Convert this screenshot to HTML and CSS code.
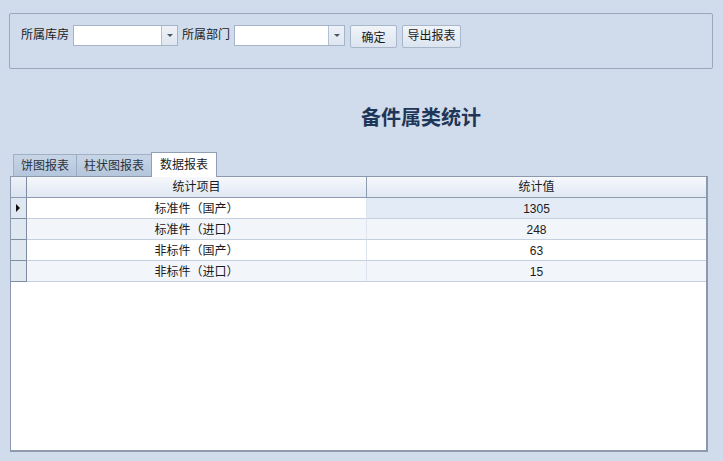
FILE: index.html
```html
<!DOCTYPE html>
<html lang="zh-CN">
<head>
<meta charset="utf-8">
<title>备件属类统计</title>
<link rel="stylesheet" href="styles.css">
</head>
<body>
<div class="page">
  <div class="toolbar">
    <span class="label">所属库房</span>
    <div class="combo combo-a"><div class="combo-text"></div><div class="combo-btn"><span class="arrow"></span></div></div>
    <span class="label">所属部门</span>
    <div class="combo combo-b"><div class="combo-text"></div><div class="combo-btn"><span class="arrow"></span></div></div>
    <button class="btn btn-ok">确定</button>
    <button class="btn btn-export">导出报表</button>
  </div>
  <h1 class="title">备件属类统计</h1>
  <div class="tabs">
    <div class="tab tab-1">饼图报表</div>
    <div class="tab tab-2">柱状图报表</div>
    <div class="tab tab-3 active">数据报表</div>
  </div>
  <div class="grid">
    <div class="row head">
      <div class="ind"></div>
      <div class="cell c1">统计项目</div>
      <div class="cell c2">统计值</div>
    </div>
    <div class="row data r1">
      <div class="ind"><span class="mark"></span></div>
      <div class="cell c1">标准件（国产）</div>
      <div class="cell c2 cur">1305</div>
    </div>
    <div class="row data alt">
      <div class="ind"></div>
      <div class="cell c1">标准件（进口）</div>
      <div class="cell c2">248</div>
    </div>
    <div class="row data">
      <div class="ind"></div>
      <div class="cell c1">非标件（国产）</div>
      <div class="cell c2">63</div>
    </div>
    <div class="row data alt">
      <div class="ind"></div>
      <div class="cell c1">非标件（进口）</div>
      <div class="cell c2">15</div>
    </div>
    <div class="empty"></div>
  </div>
</div>
</body>
</html>
```

FILE: styles.css
```css
* { box-sizing: border-box; }
html, body {
  margin: 0;
  padding: 0;
  width: 723px;
  height: 461px;
  overflow: hidden;
  background: #d0dcec;
  font-family: "Liberation Sans", "Noto Sans CJK SC", sans-serif;
  font-size: 12px;
  color: #1b1b1b;
}
.page {
  display: flex;
  flex-direction: column;
  height: 461px;
}
.toolbar {
  margin: 13px 10px 0 9px;
  height: 56px;
  border: 1px solid #9aa8bc;
  border-radius: 2px;
  padding: 11px 0 0 11px;
  display: flex;
  align-items: flex-start;
  gap: 4px;
}
.label {
  line-height: 21px;
  height: 21px;
  white-space: nowrap;
  width: 48px;
}
.combo {
  display: flex;
  height: 21px;
  border: 1px solid #a5b4c9;
  background: #fff;
}
.combo-a { width: 105px; }
.combo-b { width: 111px; }
.combo-text { flex: 1; }
.combo-btn {
  width: 16px;
  border-left: 1px solid #b3c0d2;
  background: linear-gradient(#eef2f8, #dfe6f0);
  display: flex;
  align-items: center;
  justify-content: center;
}
.arrow {
  width: 0;
  height: 0;
  border-left: 3px solid transparent;
  border-right: 3px solid transparent;
  border-top: 3px solid #4a5565;
}
.btn {
  height: 23px;
  padding: 0;
  margin: 0 0 0 1px;
  border: 1px solid #a9b7cb;
  border-radius: 2px;
  background: linear-gradient(#f1f5fa, #dbe4ef);
  font-family: "Liberation Sans", "Noto Sans CJK SC", sans-serif;
  font-size: 12px;
  color: #1b1b1b;
  line-height: 21px;
}
.btn-ok { width: 47px; padding-top: 2px; }
.btn-export { width: 59px; }
.title {
  margin: 35px 0 0 361px;
  font-size: 20px;
  line-height: 26px;
  font-weight: bold;
  color: #1e3759;
  font-family: "Noto Sans CJK SC", sans-serif;
}
.tabs {
  margin: 22px 0 0 13px;
  display: flex;
  align-items: flex-end;
  height: 24px;
  position: relative;
  z-index: 1;
}
.tab {
  height: 22px;
  line-height: 22px;
  text-align: center;
  color: #2a3340;
  border: 1px solid #9fb0c6;
  border-bottom: none;
  background: linear-gradient(#c7d5e6, #b4c6dc);
  white-space: nowrap;
}
.tab-1 { width: 64px; }
.tab-2 { width: 76px; border-left: 1px solid #9aacc3; margin-left: -1px; }
.tab-3 { width: 66px; margin-left: -1px; }
.tab.active {
  height: 25px;
  margin-bottom: -1px;
  background: #fff;
  border-color: #8f9fb5;
  color: #1b1b1b;
  line-height: 24px;
}
.grid {
  margin: 0 0 0 10px;
  width: 698px;
  height: 276px;
  border: 1px solid #8b98ad;
  border-right: 2px solid #8b98ad;
  border-bottom: 2px solid #8e9aae;
  background: #fff;
  display: flex;
  flex-direction: column;
}
.row {
  display: grid;
  grid-template-columns: 16px 340px 1fr;
  height: 21px;
  flex: none;
}
.ind {
  height: 21px;
  background: #dfe7f1;
  border-right: 1px solid #7f8da3;
  border-bottom: 1px solid #7f8da3;
  display: flex;
  align-items: center;
  padding-left: 5px;
}
.mark {
  width: 0;
  height: 0;
  border-top: 4px solid transparent;
  border-bottom: 4px solid transparent;
  border-left: 4px solid #111;
}
.cell {
  height: 21px;
  text-align: center;
  line-height: 20px;
  border-bottom: 1px solid #c5d0df;
  white-space: nowrap;
}
.data .cell {
  padding-top: 2px;
  line-height: 18px;
}
.c1 { border-right: 1px solid #dde4ee; }
.head .cell {
  background: linear-gradient(#f6f8fc, #e0e8f3);
  border-bottom: 1px solid #8d9bb1;
}
.head .c1 { border-right: 1px solid #8d9bb1; }
.head .ind {
  background: linear-gradient(#eef2f8, #dae3ef);
  border-bottom: 1px solid #8d9bb1;
}
.alt .cell { background: #f2f5fa; }
.cur { background: #e3ebf6; }
.empty { flex: 1; background: #fff; }
```
